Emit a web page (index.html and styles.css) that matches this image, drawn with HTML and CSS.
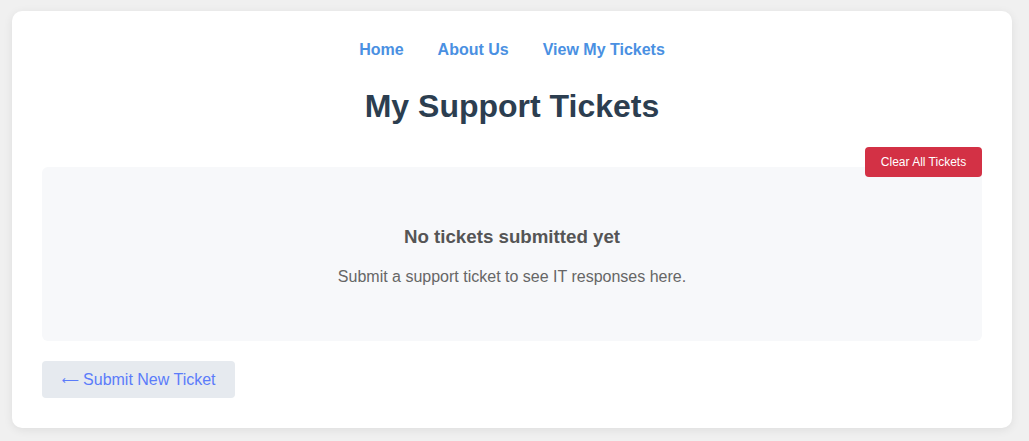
FILE: index.html
```html
<!DOCTYPE html>
<html>
<head>
<meta charset="utf-8">
<link rel="stylesheet" href="styles.css">
</head>
<body>
<div class="card">
  <nav class="nav">
    <a href="#">Home</a>
    <a href="#">About Us</a>
    <a href="#">View My Tickets</a>
  </nav>
  <h1 class="title">My Support Tickets</h1>
  <div class="actions">
    <button class="clear-btn">Clear All Tickets</button>
  </div>
  <div class="empty">
    <h3 class="empty-title">No tickets submitted yet</h3>
    <p class="empty-text">Submit a support ticket to see IT responses here.</p>
  </div>
  <div class="footer">
    <a href="#" class="back-btn"><span class="arrow">⟵</span> Submit New Ticket</a>
  </div>
</div>
</body>
</html>
```
FILE: styles.css
```css
html, body {
  margin: 0;
  padding: 0;
}
body {
  background: #f0f0f0;
  font-family: "Liberation Sans", Arial, sans-serif;
  padding: 11px 0 0 12px;
  height: 441px;
  box-sizing: border-box;
  overflow: hidden;
}
.card {
  width: 1000px;
  box-sizing: border-box;
  background: #fff;
  border-radius: 10px;
  box-shadow: 0 2px 10px rgba(0,0,0,0.08);
  padding: 30px 30px 30px;
}
.nav {
  display: flex;
  justify-content: center;
  gap: 34px;
  line-height: 18px;
}
.nav a {
  color: #4a90e2;
  font-weight: bold;
  font-size: 16px;
  text-decoration: none;
}
.title {
  margin: 29px 0 0;
  text-align: center;
  font-size: 32px;
  line-height: 37px;
  color: #2c3e50;
}
.actions {
  display: flex;
  justify-content: flex-end;
  margin-top: 22px;
  height: 20px;
}
.clear-btn {
  position: relative;
  z-index: 1;
  background: #d33145;
  color: #fff;
  border: none;
  border-radius: 4px;
  height: 30px;
  width: 117px;
  padding: 0;
  font-family: "Liberation Sans", Arial, sans-serif;
  font-size: 12px;
}
.empty {
  background: #f7f8fa;
  border-radius: 6px;
  height: 174px;
  box-sizing: border-box;
  padding: 59px 20px 0;
  text-align: center;
}
.empty-title {
  margin: 0;
  font-size: 18.72px;
  line-height: 21px;
  color: #555;
}
.empty-text {
  margin: 21px 0 0;
  font-size: 16px;
  line-height: 18px;
  color: #666;
}
.footer {
  margin-top: 20px;
  display: flex;
}
.back-btn {
  display: inline-flex;
  align-items: center;
  justify-content: center;
  width: 193px;
  height: 37px;
  background: #e6eaef;
  color: #5b7cfa;
  border-radius: 4px;
  font-size: 16px;
  text-decoration: none;
  white-space: pre;
}
.arrow {
  font-family: "DejaVu Sans", sans-serif;
  font-size: 12px;
}
```
